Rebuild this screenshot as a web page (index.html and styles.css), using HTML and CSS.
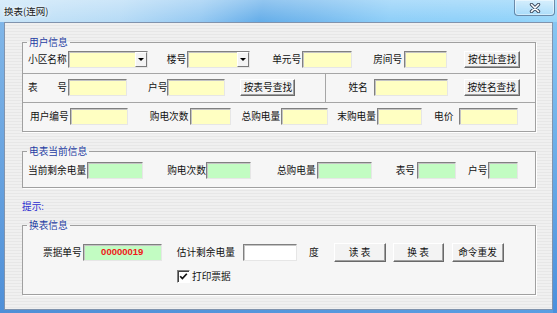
FILE: index.html
```html
<!DOCTYPE html>
<html lang="zh-CN">
<head>
<meta charset="utf-8">
<title>换表(连网)</title>
<link rel="stylesheet" href="styles.css">
</head>
<body>
<div class="window">
  <div class="titlebar">
    <span class="title">换表(连网)</span>
    <span class="close">
      <svg width="12" height="10" viewBox="0 0 12 10"><path d="M2.5 1.5 L9.5 8.5 M9.5 1.5 L2.5 8.5" stroke="#3c4b60" stroke-width="3.4" stroke-linecap="round" fill="none"/><path d="M2.5 1.5 L9.5 8.5 M9.5 1.5 L2.5 8.5" stroke="#fff" stroke-width="1.6" stroke-linecap="round" fill="none"/></svg>
    </span>
  </div>
  <div class="client">
    <fieldset class="group">
      <legend>用户信息</legend>
      <div class="row r1">
        <span class="lbl">小区名称</span>
        <span class="combo ml1 w80"><span class="arrow"></span></span>
        <span class="lbl ml19">楼号</span>
        <span class="combo ml1 w63"><span class="arrow"></span></span>
        <span class="lbl ml22">单元号</span>
        <span class="field ml1 w50"></span>
        <span class="lbl ml21">房间号</span>
        <span class="field ml2 w43"></span>
        <span class="btn ml17 w56">按住址查找</span>
      </div>
      <div class="row r2">
        <span class="lbl spread"><span>表</span><span>号</span></span>
        <span class="field ml1 w59"></span>
        <span class="lbl ml21">户号</span>
        <span class="field w58"></span>
        <span class="btn ml15 w55">按表号查找</span>
        <span class="vdiv ml30"></span>
        <span class="lbl ml22">姓名</span>
        <span class="field ml6 w74"></span>
        <span class="btn ml16 w56">按姓名查找</span>
      </div>
      <div class="row r3">
        <span class="lbl ml2">用户编号</span>
        <span class="field ml1 w58"></span>
        <span class="lbl ml22">购电次数</span>
        <span class="field ml1 w41"></span>
        <span class="lbl ml11">总购电量</span>
        <span class="field ml1 w47"></span>
        <span class="lbl ml9">末购电量</span>
        <span class="field ml1 w45"></span>
        <span class="lbl ml12">电价</span>
        <span class="field ml6 w59"></span>
      </div>
    </fieldset>

    <fieldset class="group g2">
      <legend>电表当前信息</legend>
      <div class="row g2row">
        <span class="lbl">当前剩余电量</span>
        <span class="field green ml1 w56"></span>
        <span class="lbl ml24">购电次数</span>
        <span class="field green w45"></span>
        <span class="lbl ml26">总购电量</span>
        <span class="field green ml1 w55"></span>
        <span class="lbl ml24">表号</span>
        <span class="field green ml2 w39"></span>
        <span class="lbl ml12">户号</span>
        <span class="field green ml1 w30"></span>
      </div>
    </fieldset>

    <div class="hint">提示:</div>

    <fieldset class="group g3">
      <legend>换表信息</legend>
      <div class="row g3r1">
        <span class="lbl">票据单号</span>
        <span class="field green ticket ml1 w79">00000019</span>
        <span class="lbl ml15">估计剩余电量</span>
        <span class="field white ml8 w54"></span>
        <span class="lbl ml12">度</span>
        <span class="btn tall ml15 w52">读 表</span>
        <span class="btn tall ml7 w51">换 表</span>
        <span class="btn tall ml8 w52">命令重发</span>
      </div>
      <div class="row g3r2">
        <span class="check">
          <svg width="9" height="9" viewBox="0 0 9 9"><path d="M1.2 4.2 L3.4 6.6 L7.8 1.8" stroke="#111" stroke-width="1.7" fill="none"/></svg>
        </span>
        <span class="lbl ml2">打印票据</span>
      </div>
    </fieldset>
  </div>
</div>
</body>
</html>
```

FILE: styles.css
```css
* { box-sizing: border-box; }
html, body { margin: 0; padding: 0; }
body {
  width: 557px;
  height: 313px;
  overflow: hidden;
  font-family: "Noto Sans CJK SC", "Noto Sans", sans-serif;
  font-size: 9.7px;
  line-height: 14px;
  color: #111;
}

.window {
  width: 557px;
  height: 313px;
  display: flex;
  flex-direction: column;
  background:
    linear-gradient(#80b6e8, #4e8fd8) 0 22px / 4px 291px no-repeat,
    linear-gradient(#86c6f2, #4b90dc) 553px 22px / 4px 291px no-repeat,
    linear-gradient(90deg, #4f8fd6, #5a9ee2) 0 310px / 557px 3px no-repeat,
    linear-gradient(rgba(255,255,255,.3), rgba(255,255,255,0) 22px),
    linear-gradient(100deg, #c9e5f8 0%, #b6dbf6 20%, #95c9f2 33%, #64ade9 43%, #74b9ee 52%, #8dcef8 64%, #8fd2fa 85%, #a7dcf8 100%);
}

.titlebar {
  height: 22px;
  flex-shrink: 0;
  display: flex;
  justify-content: space-between;
  align-items: flex-start;
}
.title {
  padding-left: 4px;
  line-height: 22px;
  font-size: 9.5px;
  color: #1a1a1a;
  text-shadow: 0 0 5px #fff, 0 0 3px rgba(255,255,255,.8);
}
.close {
  width: 41px;
  height: 16px;
  margin-right: 2px;
  border: 1px solid rgba(30,60,100,.55);
  border-top: 0;
  border-radius: 0 0 4px 4px;
  background: linear-gradient(rgba(255,255,255,.45), rgba(255,255,255,.12));
  box-shadow: inset 0 0 0 1px rgba(255,255,255,.45);
  display: flex;
  align-items: center;
  justify-content: center;
}

.client {
  flex: 1;
  margin: 0 4px 3px 4px;
  border: 1px solid #8093ad;
  background: repeating-linear-gradient(to bottom, #f0f0f0 0, #f0f0f0 2px, #e7e7e7 2px, #e7e7e7 3px);
  padding: 12px 16px 0 17px;
  display: flex;
  flex-direction: column;
}

.group {
  margin: 0;
  padding: 0;
  min-width: 0;
  border: 1px solid #a0a0a0;
  background: #f6f6f6;
  box-shadow: 1px 1px 0 #fff;
}
.group legend {
  margin-left: 4px;
  padding: 0 2px;
  line-height: 14px;
  color: #1f3ea3;
}
.g2 { margin-top: 12px; padding-bottom: 5px; }
.g3 { margin-top: 5px; }

.row { display: flex; align-items: center; padding-left: 5px; }
.r1 { height: 25px; padding-bottom: 4px; border-bottom: 1px solid #a6a6a6; }
.r2 { height: 29px; padding-bottom: 2px; border-bottom: 1px solid #a6a6a6; }
.r3 { height: 28px; padding-bottom: 2px; }
.g2row { height: 24px; }
.g3r1 { height: 20px; margin-top: 10px; padding-left: 20px; }
.g3r2 { height: 16px; margin-top: 6px; margin-bottom: 10px; padding-left: 154px; }

.hint { margin-top: 11px; line-height: 14px; color: #2b2bd0; }

.lbl { flex-shrink: 0; white-space: nowrap; }
.spread { width: 39px; display: flex; justify-content: space-between; }

.field {
  flex-shrink: 0;
  height: 17px;
  border: 1px solid;
  border-color: #808080 #e6e6e6 #e6e6e6 #808080;
  box-shadow: inset 1px 1px 0 #c4c4c4;
  background: #ffffc2;
}
.green { background: #c2fcc2; }
.white { background: #fff; }
.ticket {
  display: flex;
  align-items: center;
  justify-content: center;
  color: #f01818;
  font-family: "Liberation Sans", sans-serif;
  font-weight: bold;
  font-size: 9.5px;
}

.combo {
  flex-shrink: 0;
  height: 17px;
  display: flex;
  justify-content: flex-end;
  border: 1px solid;
  border-color: #808080 #e6e6e6 #e6e6e6 #808080;
  box-shadow: inset 1px 1px 0 #c4c4c4;
  background: #ffffc2;
}
.arrow {
  width: 12px;
  height: 100%;
  background: #f4f4f4;
  border: 1px solid;
  border-color: #fff #7a7a7a #7a7a7a #fff;
  display: flex;
  align-items: center;
  justify-content: center;
}
.arrow::after {
  content: "";
  border-left: 3px solid transparent;
  border-right: 3px solid transparent;
  border-top: 3px solid #000;
}

.btn {
  flex-shrink: 0;
  height: 17px;
  display: flex;
  align-items: center;
  justify-content: center;
  background: #f3f3f3;
  border: 1px solid;
  border-color: #fff #696969 #696969 #fff;
  box-shadow: inset -1px -1px 0 #a0a0a0;
  color: #111;
  white-space: nowrap;
}
.btn.tall { height: 19px; }

.vdiv {
  align-self: stretch;
  width: 0;
  border-left: 1px solid #a6a6a6;
  margin-bottom: -2px;
  flex-shrink: 0;
}

.check {
  width: 13px;
  height: 13px;
  flex-shrink: 0;
  border: 1px solid;
  border-color: #808080 #fff #fff #808080;
  box-shadow: inset 1px 1px 0 #404040;
  background: #fff;
  display: flex;
  align-items: center;
  justify-content: center;
}

.ml0 { margin-left: 0; }
.ml1 { margin-left: 1px; }
.ml2 { margin-left: 2px; }
.ml6 { margin-left: 6px; }
.ml7 { margin-left: 7px; }
.ml8 { margin-left: 8px; }
.ml9 { margin-left: 9px; }
.ml11 { margin-left: 11px; }
.ml12 { margin-left: 12px; }
.ml15 { margin-left: 15px; }
.ml16 { margin-left: 16px; }
.ml17 { margin-left: 17px; }
.ml19 { margin-left: 19px; }
.ml21 { margin-left: 21px; }
.ml22 { margin-left: 22px; }
.ml24 { margin-left: 24px; }
.ml26 { margin-left: 26px; }
.ml30 { margin-left: 30px; }

.w30 { width: 30px; }
.w39 { width: 39px; }
.w41 { width: 41px; }
.w43 { width: 43px; }
.w45 { width: 45px; }
.w47 { width: 47px; }
.w50 { width: 50px; }
.w51 { width: 51px; }
.w52 { width: 52px; }
.w54 { width: 54px; }
.w55 { width: 55px; }
.w56 { width: 56px; }
.w58 { width: 58px; }
.w59 { width: 59px; }
.w63 { width: 63px; }
.w74 { width: 74px; }
.w79 { width: 79px; }
.w80 { width: 80px; }
```
